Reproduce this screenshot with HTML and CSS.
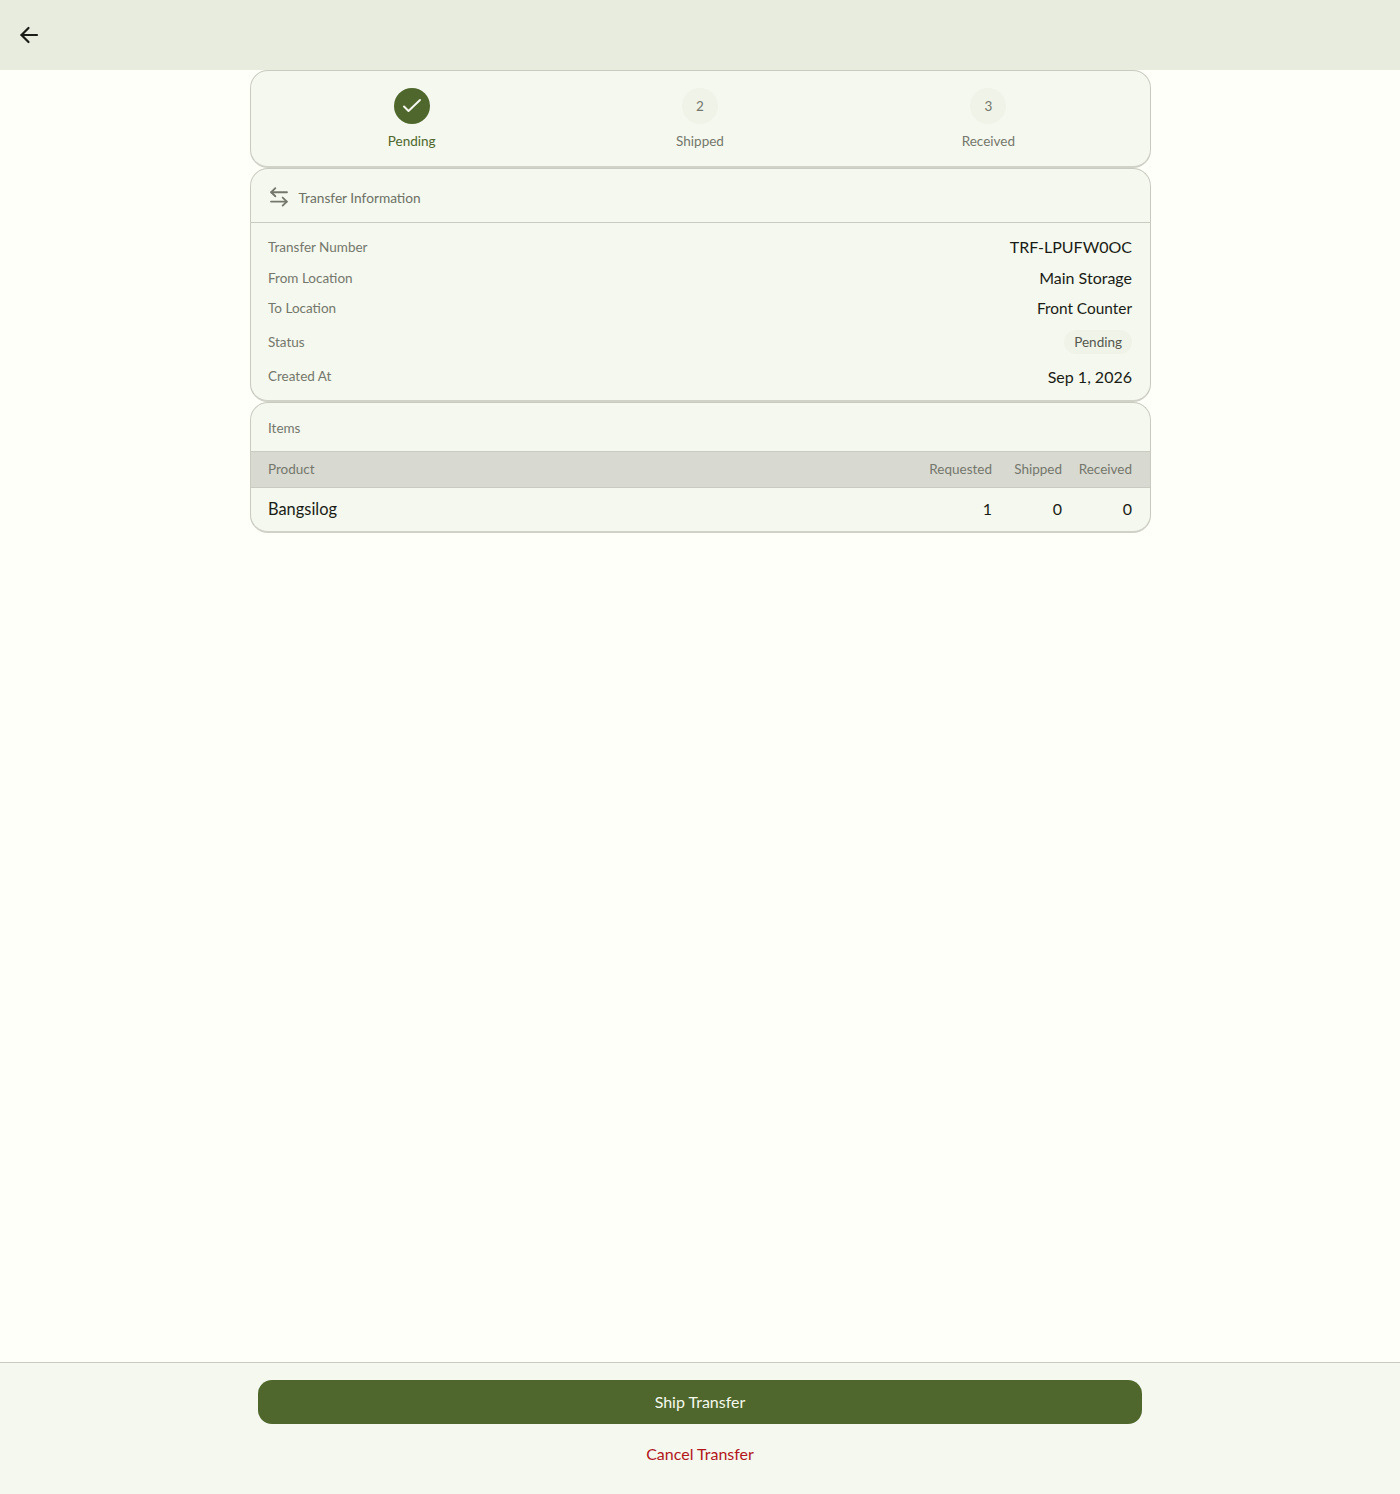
FILE: index.html
```html
<!DOCTYPE html>
<html lang="en">
<head>
<meta charset="utf-8">
<title>Transfer</title>
<link rel="stylesheet" href="styles.css">
</head>
<body>
<div class="app">
  <header class="topbar">
    <svg class="back" viewBox="0 0 24 24" width="24" height="24" fill="none" stroke="#1a1c16" stroke-width="2.2" stroke-linecap="round" stroke-linejoin="round"><path d="M20 12H4.5"/><path d="M11.5 5l-7 7 7 7"/></svg>
  </header>
  <main class="content">
    <section class="card stepper">
      <div class="step active">
        <div class="dot"><svg viewBox="0 0 24 24" width="24" height="24" fill="none" stroke="#f4f7ee" stroke-width="2" stroke-linecap="round" stroke-linejoin="round"><path d="M4 12.5l4.5 4.5L20 6"/></svg></div>
        <div class="step-label">Pending</div>
      </div>
      <div class="step">
        <div class="dot">2</div>
        <div class="step-label">Shipped</div>
      </div>
      <div class="step">
        <div class="dot">3</div>
        <div class="step-label">Received</div>
      </div>
    </section>
    <section class="card">
      <div class="info-head">
        <svg viewBox="0 0 24 24" width="22" height="22" fill="none" stroke="#74776c" stroke-width="2" stroke-linecap="round" stroke-linejoin="round"><path d="M20.7 6.8H3.5"/><path d="M8 2.4L3.5 6.8 8 11.2"/><path d="M3.3 17h17.2"/><path d="M16 12.6l4.5 4.4L16 21.4"/></svg>
        <span>Transfer Information</span>
      </div>
      <div class="info-body">
        <div class="row"><span class="key">Transfer Number</span><span class="val">TRF-LPUFW0OC</span></div>
        <div class="row"><span class="key">From Location</span><span class="val">Main Storage</span></div>
        <div class="row"><span class="key">To Location</span><span class="val narrow">Front Counter</span></div>
        <div class="row status"><span class="key">Status</span><span class="badge">Pending</span></div>
        <div class="row"><span class="key">Created At</span><span class="val">Sep 1, 2026</span></div>
      </div>
    </section>
    <section class="card">
      <div class="items-head">Items</div>
      <div class="tr th">
        <span class="c-name">Product</span><span class="c-req">Requested</span><span class="c-ship">Shipped</span><span class="c-rec">Received</span>
      </div>
      <div class="tr td">
        <span class="c-name">Bangsilog</span><span class="c-req">1</span><span class="c-ship">0</span><span class="c-rec">0</span>
      </div>
    </section>
  </main>
  <footer class="footer">
    <button class="primary">Ship Transfer</button>
    <button class="cancel">Cancel Transfer</button>
  </footer>
</div>
</body>
</html>
```
FILE: styles.css
```css
* { box-sizing: border-box; }
html, body { margin: 0; height: 100%; }
body { background: #fefff9; color: #1a1c16; font-family: Lato, "Noto Sans", sans-serif; }
.app { display: flex; flex-direction: column; height: 100vh; }
.topbar { height: 70px; background: #e8ecdf; display: flex; align-items: center; padding: 0 17px; flex: none; }
.back { display: block; }
.content { flex: 1; width: 901px; margin: 0 auto; display: flex; flex-direction: column; align-items: stretch; }
.card { background: #f4f8ee; border: 1px solid #c9cbc0; border-bottom: 2px solid #d0d2c8; border-radius: 18px; overflow: hidden; flex: none; }
.stepper { height: 98px; display: flex; padding: 17px 17px 0; }
.step { flex: 1; display: flex; flex-direction: column; align-items: center; }
.dot { width: 36px; height: 36px; padding-bottom: 1px; border-radius: 50%; background: #eff3e8; color: #74776c; font-size: 13.5px; display: flex; align-items: center; justify-content: center; }
.active .dot { background: #4f672c; padding-bottom: 0; }
.step-label { margin-top: 8px; font-size: 13.5px; line-height: 18px; color: #74776c; }
.active .step-label { color: #4f672c; }
.info-head { height: 54px; padding: 3px 17.5px 0; display: flex; align-items: center; gap: 8.5px; border-bottom: 1px solid #c9cbc0; font-size: 13.7px; color: #6e7166; }
.info-body { padding: 8.5px 17.5px 8.5px; }
.row { display: flex; justify-content: space-between; align-items: center; height: 30.75px; }
.row.status { height: 37px; }
.key { font-size: 13.5px; color: #74776c; }
.val { font-size: 16px; color: #1a1c16; }
.val.narrow { font-size: 15.4px; }
.badge { height: 24px; padding: 0 10px; border-radius: 12px; background: #eff3e8; font-size: 13.5px; color: #55584e; display: flex; align-items: center; }
.items-head { height: 48px; padding: 2px 17.5px 0; display: flex; align-items: center; font-size: 13.5px; color: #74776c; }
.tr { display: flex; align-items: center; padding: 0 17.5px; }
.tr span { text-align: right; }
.tr .c-name { flex: 1; text-align: left; }
.c-req { width: 70px; }
.c-ship { width: 70px; }
.c-rec { width: 70px; }
.th { height: 37px; padding-bottom: 2px; background: #d8d9d1; border-top: 1px solid #c9cbc0; border-bottom: 1px solid #c9cbc0; font-size: 13.5px; color: #74776c; }
.td { height: 43px; padding-bottom: 3px; font-size: 16px; color: #1a1c16; }
.td .c-name { font-size: 16.4px; }
.footer { height: 132px; flex: none; border-top: 1px solid #c9cbc0; background: #f4f8ee; display: flex; flex-direction: column; align-items: center; padding-top: 17px; }
button { font-family: inherit; border: 0; cursor: pointer; }
.primary { width: 884px; height: 44px; padding-bottom: 2px; border-radius: 14px; background: #4f672c; color: #f6f9ee; font-size: 16px; }
.cancel { margin-top: 19px; background: none; color: #b3151b; font-size: 16px; line-height: 22px; padding: 0; }
```
